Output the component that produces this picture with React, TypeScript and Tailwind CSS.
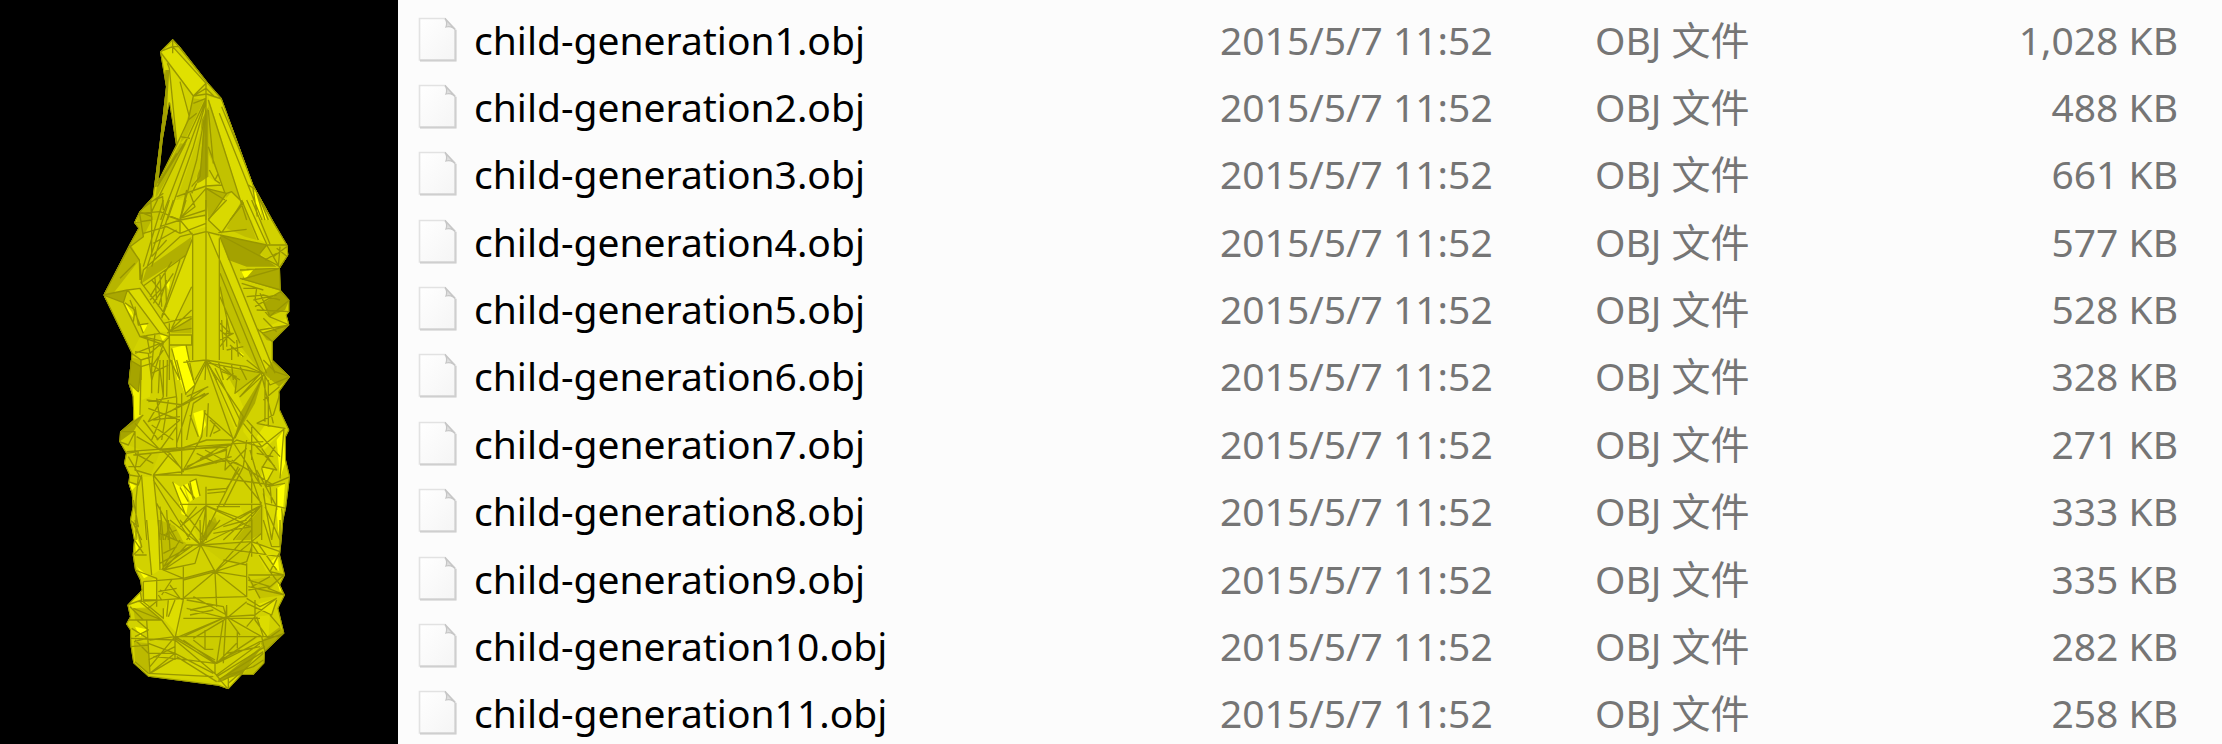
const files = [
  { name: "child-generation1.obj", size: "1,028 KB" },
  { name: "child-generation2.obj", size: "488 KB" },
  { name: "child-generation3.obj", size: "661 KB" },
  { name: "child-generation4.obj", size: "577 KB" },
  { name: "child-generation5.obj", size: "528 KB" },
  { name: "child-generation6.obj", size: "328 KB" },
  { name: "child-generation7.obj", size: "271 KB" },
  { name: "child-generation8.obj", size: "333 KB" },
  { name: "child-generation9.obj", size: "335 KB" },
  { name: "child-generation10.obj", size: "282 KB" },
  { name: "child-generation11.obj", size: "258 KB" },
];

type Section = {
  y: number;
  faces: [string, string][];
  edges: string;
};

// The mesh is drawn in four stacked sections, each with its own vertical origin.
const sections: Section[] = [
  {
    y: 0,
    faces: [
      ["#e0e000", "M245 95L278 80L378 190L340 225z"],
      ["#d8d800", "M245 110L268 140L305 185L328 290L322 320L290 368L265 230z"],
      ["#c2c200", "M385 235L435 370L500 600L460 600L430 500L385 400z"],
      ["#dcdc00", "M385 230L422 237L575 600L500 600z"],
      ["#a5a300", "M365 300L385 260L385 480L350 490z"],
      ["#c8c800", "M370 310L362 440L330 520L290 540z"],
      ["#bcbc00", "M340 235L372 240L320 350L300 370z"],
      ["#b5b500", "M300 370L318 372L225 540L232 490z"],
      ["#c9c900", "M180 575L218 535L250 520L245 600L168 600z"],
      ["#b5b300", "M375 505L440 520L385 595z"],
      ["#d9d900", "M385 598L455 515L490 548L445 600z"],
      ["#dddd00", "M385 470L420 495L375 500L340 500z"],
      ["#ffff00", "M518 515L532 520L546 600L532 590z"],
      ["#bfbd00", "M470 600L490 550L505 600z"],
    ],
    edges:
      "M278 57L240 95L278 80L378 190L340 228L240 95M278 57V100M278 80L300 80M278 57L385 190L425 237L380 222L340 228M378 190V600M340 228L378 205L405 232M262 130L268 145L290 368M300 185L328 290M340 228L325 300L290 375L225 500M378 235L320 360L215 575M378 240L330 370L242 600M378 245L340 380L262 600M372 300L350 420L300 595M378 260L360 470L335 500M385 240L500 600M385 270L400 430M385 380L435 520M425 237L578 600M425 260L565 600M418 280L546 600M340 250L378 235M325 300L350 280M300 350L330 355M235 490L290 400M232 500L325 350M218 530L178 572L165 600M178 572L250 520M212 530L215 600M178 580L240 575L300 600M290 530L378 498L425 495M300 595L378 505L440 520L385 600M378 570L300 595M320 510L300 600M440 520L455 515L490 550L450 600M378 505L435 540M330 520L345 560L300 595M350 490L335 520M388 450L405 480L415 460M405 480L420 490M505 495L530 510L578 600M518 500L532 590M530 520L555 600M225 540L248 530L250 570",
  },
  {
    y: 540,
    faces: [
      ["#d4d400", "M338 105L380 95L418 115L418 480H338z"],
      ["#c1c100", "M418 115L560 540L475 430L420 280z"],
      ["#dada00", "M385 98L415 110L585 520L560 520z"],
      ["#dcdc00", "M335 120L335 260L290 360L245 355z"],
      ["#b1af00", "M335 110L200 205L185 250L318 165z"],
      ["#a4a200", "M420 105L560 135L540 165L590 200L500 200L445 180z"],
      ["#adab00", "M505 208L600 208L602 272L485 238z"],
      ["#b7b500", "M150 130L178 180L100 280L70 285z"],
      ["#aaa800", "M70 285L142 270L130 308z"],
      ["#cbcb00", "M70 285L130 308L180 410L155 460z"],
      ["#dcdc00", "M143 270L175 265L268 395L235 395z"],
      ["#d9d900", "M268 0H315L300 55L272 50z"],
      ["#dddd00", "M300 65L380 45V80L300 100z"],
      ["#d9d900", "M385 58L440 0H485L425 95z"],
      ["#c0be00", "M485 0L530 120L495 110L440 85z"],
      ["#dede00", "M495 0L520 0L560 130L535 118z"],
      ["#ffff00", "M535 0L548 10L560 60L550 55z"],
      ["#b8b800", "M178 35L212 0L215 60L190 110L150 140z"],
      ["#cbcb00", "M560 135L622 130L625 165L600 205L540 160z"],
      ["#a9a700", "M550 310L602 275L628 300L615 330L568 350z"],
      ["#dddd00", "M538 390L628 352L622 375L550 398z"],
      ["#b1af00", "M545 400L625 375L578 425L560 420z"],
      ["#ffff00", "M485 215L522 207L495 238z"],
      ["#ffff00", "M255 240L270 245L265 270z"],
      ["#ffff00", "M135 308L155 335L162 355L140 330zM175 370L202 375L190 398z"],
      ["#bab800", "M270 400L335 350V400z"],
      ["#d9d900", "M270 405H335V435H275z"],
      ["#ffff00", "M275 445L318 435L345 540H292z"],
      ["#dada00", "M165 455L205 460L212 540H183V480z"],
      ["#bcba00", "M148 470L183 480V540H148z"],
      ["#d8d800", "M310 490L378 480L550 520L540 540H340z"],
      ["#a6a400", "M580 485L630 530L610 540H570z"],
      ["#ffff00", "M240 405L262 407L248 422zM480 455L492 465L484 472z"],
    ],
    edges:
      "M338 105V480M378 95V480M418 115V480M338 105L378 95L418 105M378 0V95M268 0L200 205M280 0L215 200M250 0L190 200M318 0L300 60V100M268 50L300 60L380 45M300 100L378 70M300 60L338 105M300 60L240 80M338 100L300 110L190 210L183 250M338 115L318 165L190 258M335 120L245 355M335 260L275 385M385 58L440 0M385 60L425 98L485 10M415 98L500 88M485 0L535 120M500 0L560 132M515 0L570 132M540 0L600 100L622 135L560 135L420 105L600 200L622 170M560 135L600 205L500 208M560 135L540 160M420 110L585 520M385 98L560 520M420 220L545 525M420 290L480 430M420 260L450 400M212 0L178 35L162 68L215 60M178 35L215 50L215 170M178 35L190 110L150 140L178 180L180 240M150 135L70 285L142 270L130 308L70 285L155 460M165 190L120 235M143 270L180 265L268 395M143 270L240 400L180 410L130 308M180 190L185 250L268 360M215 170L260 120M190 100L260 80L300 100M220 130L290 90M215 240L240 270L210 300M225 235L230 300M240 225L245 320M255 210L260 320M275 185L210 290M280 220L220 310M300 180L245 350M260 240L235 320M250 370L335 350M268 395L335 385M268 395L335 355M268 405H335V435H270M268 370V540M240 400L268 410L240 440M262 400L335 330M180 410L240 430L165 460M200 405L210 460L250 425L190 410M225 400L215 500L250 450M250 430L215 540M165 455L205 460L215 540M183 480V540M155 460L183 480L215 470M245 430L300 540M275 445L300 540M318 435L340 540M310 487L378 480L500 500L550 520M378 480L345 540M378 480L410 540M378 480L480 540M378 480L375 540M415 485L430 540M455 495L460 540M480 500L500 540M480 210L600 205L485 238M480 235L602 270M485 250L550 270M490 265L530 265L525 300L568 350M500 290L550 285L600 300M520 300L590 285M540 280L568 345M525 320L602 275L628 300L568 350M530 330L628 335M568 350L628 375L540 390M550 355L590 395M545 400L628 375M530 385L578 425V480M580 485L630 530M420 370L450 400L420 440M425 360L430 450M440 355V440M420 390L465 430M430 400H460L420 420M450 435L490 470M455 440V480M470 420L475 470M440 450L490 440M135 308L165 330L160 365M150 300L190 400M165 320L175 375L205 370M590 145L622 170M600 140L595 200M580 170L620 140M555 180L590 160",
  },
  {
    y: 1020,
    faces: [
      ["#a6a400", "M150 0L183 20L175 95L148 70z"],
      ["#dddd00", "M183 20H215L210 110L185 120z"],
      ["#ffff00", "M278 0H320L345 75L315 103z"],
      ["#d2d200", "M380 8L460 235L385 170z"],
      ["#dbdb00", "M385 10L455 60L500 165L465 210z"],
      ["#aaa800", "M550 45L525 130L465 235L480 160z"],
      ["#acaa00", "M550 40L580 0L630 50L598 80z"],
      ["#f4f400", "M158 82L183 95V165L162 180z"],
      ["#a6a400", "M190 165L120 215L118 245L160 215z"],
      ["#cccc00", "M170 230L240 270L195 275L145 255z"],
      ["#ffff00", "M340 160L368 150L378 195L358 230z"],
      ["#e4e400", "M530 230L555 195L615 205L552 270z"],
      ["#ffff00", "M590 240L612 210L615 310L600 355z"],
      ["#dbdb00", "M490 190L545 260L520 255L490 215z"],
      ["#cccc00", "M165 280L240 275L215 340L175 330z"],
      ["#d9d900", "M270 280L310 330L225 345z"],
      ["#cccc00", "M310 330L455 300L580 375L360 350z"],
      ["#ffff00", "M145 365L168 378L152 395z"],
      ["#dada00", "M185 350H220L240 540H195z"],
      ["#ffff00", "M278 365L302 382L310 375L325 425L318 468L305 462L295 410z"],
      ["#ffff00", "M312 375L325 370L340 418L330 425zM328 365L348 357L360 408L345 415z"],
      ["#d2d200", "M382 390L440 385L460 390L435 430H382z"],
      ["#d9d900", "M390 440H480L510 500L400 460z"],
      ["#b4b200", "M405 470L412 490L380 540H355z"],
      ["#b7b500", "M545 440V520L510 540H465z"],
      ["#e9e900", "M545 322L580 330L558 370L545 355z"],
      ["#ffff00", "M590 385L615 370L610 440L595 520L590 450z"],
      ["#dada00", "M550 400L590 440L585 520H555z"],
      ["#c2c200", "M430 25L545 38L470 95z"],
    ],
    edges:
      "M150 0L183 20L215 10V100M183 20L175 95L148 70M183 20L180 165M215 15L240 30L250 110M215 40L265 15M240 0L235 100M250 0V110M262 0L260 110M275 0L290 115M290 0L318 105M320 0L345 75L315 103M378 0V8L345 75L290 250M378 8L460 240L490 170L380 8M390 20L470 200M405 25L480 180M378 8L550 40M430 20L470 60L465 100L540 42L480 110L550 45L465 235M425 35L470 50M440 60L460 40M500 0L550 40M550 0L585 35L630 50L570 75L550 40M545 45L580 190M555 50V185M565 60V200M598 80L550 120M600 100L580 165L530 190M200 120L310 135L375 100M205 125L290 110M205 145L300 180M230 115L240 180L215 240M250 110L205 185L300 140M265 120L245 240M290 115V270M305 100V270M300 140L375 85M320 110L385 80M330 120L385 100L340 130M270 155L320 125M220 180L300 170M215 195L280 240M230 240L300 180M190 165L120 215L165 215L145 255L118 245M165 190L240 270L170 230M165 215V275M190 180L235 240M240 270L290 200M140 275L550 245M160 285L455 255M240 270L440 262L470 240L545 262M290 270L380 240L460 240M375 150L365 230L310 330M340 130L320 240M330 165L355 230M385 130L380 230M375 160L460 235M390 180L420 210L400 220M405 190L390 230M460 240L440 300L310 330L240 265L270 280L220 345M310 330L430 255M310 330L455 290M310 330L400 275M320 320L440 265M305 240V345M270 280L310 335L225 345M350 280L410 310M360 295L440 270M375 270L430 300M440 265L435 330L500 265M455 240L545 380M440 300L545 430M455 300L580 375L350 345L220 345M440 300L490 320L500 240M490 190L545 260L615 205L555 195L530 190M500 180L600 290M515 200V300M520 250L585 320M545 265L590 330L545 320M510 270L540 375M530 280L580 290M585 260L545 325M558 370L580 330M545 325L560 380L630 350M475 320L385 500M490 320L430 440M500 310L545 440M515 330V430M530 330L590 440M550 385L555 430L618 445M560 380L615 370M570 375L575 430M590 385V450M612 205L600 355M138 280L175 275L165 330L215 345M145 290L180 350L148 345M165 280L220 310M145 320L180 320L215 280M185 345L175 375L145 365M175 350L168 420V540M185 350L200 540M220 345L240 540M220 345L380 540M220 360L330 540M230 430L290 540M240 440L250 540M278 365L295 410L318 468M300 382L325 425M310 375L345 415M325 370L340 418L330 365L348 357L360 408M300 433H545M378 380V540M378 437L300 500M378 437L320 540M378 437L365 540M382 390L440 385L480 325M382 400L435 395M378 437L510 500M378 437L480 475L545 435M410 440L480 440M545 435L400 510M545 435L430 540M545 435L460 540M545 435V540M515 435V540M430 500L500 480M400 520L515 500M260 450L265 540M270 490L255 540M350 440L310 490M590 440L575 540M550 400L575 540M160 420L175 500L150 480M160 490L185 540M555 440L600 540M605 445L610 500",
  },
  {
    y: 1500,
    faces: [
      ["#dddd00", "M200 0H235L240 150L215 165z"],
      ["#ffff00", "M162 35L180 75L168 98zM170 140L205 168L192 175z"],
      ["#bfbd00", "M240 0L290 20L320 75L250 150z"],
      ["#d9d900", "M275 0H330L360 70L310 65z"],
      ["#aaa800", "M390 0L410 12L365 75z"],
      ["#cccc00", "M365 75L515 65L500 130L430 125z"],
      ["#dddd00", "M515 70L600 85L595 150L560 155z"],
      ["#ffff00", "M572 125L592 108L598 155z"],
      ["#dfdf00", "M190 185L230 175V240L195 245z"],
      ["#c5c300", "M505 180L612 165L570 210L615 225L540 235z"],
      ["#ffff00", "M592 185L608 205L600 215z"],
      ["#e8e800", "M145 250L180 220L210 260L160 265z"],
      ["#bcba00", "M160 265L205 265L245 300L165 300z"],
      ["#ffff00", "M165 320L200 328L180 350z"],
      ["#dddd00", "M265 240H305L295 345L245 290z"],
      ["#e6e600", "M525 255L590 235L575 285z"],
      ["#dcdc00", "M530 290L570 285L565 355L545 350z"],
      ["#b3b100", "M555 395L613 340L600 320L540 365z"],
      ["#bcba00", "M162 365L205 370L208 460L165 425z"],
      ["#ffff00", "M335 360L372 368L370 388z"],
      ["#cccc00", "M290 350L430 300L540 350L410 430z"],
      ["#a5a300", "M410 485L550 375L485 465L440 490z"],
      ["#d7d700", "M210 465L285 415L405 430L400 485z"],
      ["#dfdf00", "M415 490L445 475L480 465L445 508z"],
      ["#c2c200", "M550 400V430L520 465H485z"],
    ],
    edges:
      "M360 0L362 75L320 75L250 150M240 0L250 150L362 75L270 0M240 130L330 80M250 140L340 75M245 150L300 60M250 100L290 80M300 0L362 75L420 0M240 40L310 70M250 45L290 30M265 0L270 90M265 30L285 60M390 0L362 75L515 0M362 75L600 110M362 75L515 65M362 75L405 155L515 30M405 155L545 40M515 0V110M515 70L570 155M530 65L590 150M550 0L575 80H605M600 0V80M515 65L600 95L570 155L612 165M405 155L500 125L515 80M405 155L310 235M405 155L310 180M405 155L500 230M405 155L500 170M405 155L410 260M430 120L500 135M362 75L345 130L250 150M310 140V240M250 150L310 175L190 185M310 175L405 150M165 0L185 80L160 105M160 55L190 100M165 105L200 105M165 150L230 175V260M200 0L215 165M235 0L240 150M190 185V240H230M175 180L185 240L142 255M175 245L310 235L500 230V130M505 170L540 235M505 180L570 200L505 210M505 165L612 165L565 205L615 225L505 200M515 200L570 170M570 155L612 210M240 210L310 240M270 195L300 235M235 215L290 205M245 240L235 225M310 240L285 355M285 240L265 290M265 240L260 290M275 180L245 225M320 240L430 260L440 295L500 245M340 230L440 285M330 270L400 255M330 285L400 270M310 295H540M320 265L440 295M440 255L430 430M440 260V290L285 355M440 295L340 355M440 290L310 350M440 290L480 345M440 290L545 350M440 290L525 285L590 235M500 235L540 260L590 235M525 240V300L565 355M500 250L575 285L590 240M525 290L500 320M530 290L550 350M570 285L600 320M150 260L190 300L145 300L245 300L180 245M160 265L245 300L285 355M190 245L250 295V265M205 265L235 240M170 300L205 330L165 350M200 300L210 460M155 325L210 360L285 350H600M152 355L285 360M165 360L205 400M162 365L200 355M205 370L285 400M205 400H285L210 460M285 350L210 440M285 355V420M285 355L405 430M285 360L410 465M285 350L405 420M310 360L410 430M210 460L285 415L405 430V460M205 420L285 380M220 410L280 415M285 400L400 460M290 410L410 485M205 460L400 470M375 330V390M340 360L375 388H400M430 300L410 430L530 350M410 430L470 370M410 430L540 365M410 465L540 370M410 470L555 380M415 480L550 395M440 400L540 380M420 420L480 390M472 335V385M445 490L550 400M405 460L425 485L445 508V475M430 480L490 450L485 465M430 470L520 440L550 420M545 350L555 395L613 340L540 365M565 355L600 330M152 380L205 375M165 425L205 460",
  },
];

const outline =
  "M278 57L300 80L385 190L425 235L520 495L578 600L622 675L625 705L600 745L602 810L628 840V875L620 885L628 915L578 965V1020L630 1070L598 1115L600 1170L628 1230L618 1250V1320L630 1370L618 1465L610 1500L605 1560L600 1605L615 1665L600 1695L615 1725L595 1765L613 1840L555 1895L553 1930L520 1965H485L445 2008L415 1997L205 1970L160 1930L152 1880L150 1830L138 1812L150 1790L142 1755L185 1710L180 1680L165 1650L158 1605L162 1560L150 1500L158 1460L155 1420L145 1390L148 1365L132 1330L138 1300L118 1265L120 1235L160 1200L158 1130L145 1090L155 1000L70 825L150 670L175 625L162 608L178 575L218 530L228 455L240 360L258 200L240 95zM268 250L248 360L236 480L288 375z";

function Mesh() {
  return (
    <svg
      viewBox="0 0 720 2040"
      className="w-60"
      role="img"
      aria-label="Yellow triangulated mesh"
    >
      <defs>
        <clipPath id="mesh-outline">
          <path d={outline} clipRule="evenodd" />
        </clipPath>
      </defs>
      <g clipPath="url(#mesh-outline)" strokeLinejoin="round">
        <rect width="720" height="2040" fill="#d2d200" />
        {sections.map((section) => (
          <g key={section.y} transform={`translate(0 ${section.y})`}>
            {section.faces.map(([fill, d]) => (
              <path key={d} d={d} fill={fill} />
            ))}
          </g>
        ))}
        {sections.map((section) => (
          <path
            key={section.y}
            transform={`translate(0 ${section.y})`}
            d={section.edges}
            fill="none"
            stroke="#989600"
            strokeWidth="4"
          />
        ))}
        <path d={outline} fill="none" stroke="#989600" strokeWidth="6" />
        <path d="M262 150L254 280L238 400L224 500" fill="none" stroke="#a09e00" strokeWidth="12" />
      </g>
    </svg>
  );
}

function FileIcon() {
  return (
    <svg viewBox="0 0 40 46" className="h-[46px] w-10 shrink-0" aria-hidden="true">
      <defs>
        <linearGradient id="paper" x1="0" y1="0" x2="1" y2="1">
          <stop offset="0" stopColor="#ffffff" />
          <stop offset="1" stopColor="#f5f5f5" />
        </linearGradient>
      </defs>
      <path d="M2 2H27L39 13V44.5H2z" fill="#ededed" />
      <path d="M1.5 1.5H27L37 12V43H1.5z" fill="url(#paper)" stroke="#e2e2e2" strokeWidth="1.6" />
      <path d="M2 43.5H37.5V13" fill="none" stroke="#cfcfcf" strokeWidth="1.8" />
      <path d="M27 1.5C29 4 29 7 28 10C31 9 35 10 37 12.5z" fill="#dedede" stroke="#c6c6c6" strokeWidth="1.3" />
    </svg>
  );
}

export default function App() {
  return (
    <main className="flex h-screen overflow-hidden bg-[#fcfcfc] font-['Noto_Sans','Noto_Sans_CJK_SC',sans-serif]">
      <section className="w-[398px] shrink-0 bg-black pt-5 pl-20">
        <Mesh />
      </section>
      <section className="min-w-0 flex-1 pt-1.5">
        <table className="h-[741px] w-full table-fixed border-collapse text-left text-[39px] leading-[56px] whitespace-nowrap text-[#757575]">
          <colgroup>
            <col />
            <col className="w-[375px]" />
            <col className="w-[300px]" />
            <col className="w-[327px]" />
          </colgroup>
          <tbody>
            {files.map((file) => (
              <tr key={file.name}>
                <td className="p-0 pl-5">
                  <div className="flex items-center gap-4 text-black">
                    <FileIcon />
                    <span>{file.name}</span>
                  </div>
                </td>
                <td className="p-0">2015/5/7 11:52</td>
                <td className="p-0">OBJ 文件</td>
                <td className="p-0 pr-11 text-right">{file.size}</td>
              </tr>
            ))}
          </tbody>
        </table>
      </section>
    </main>
  );
}
